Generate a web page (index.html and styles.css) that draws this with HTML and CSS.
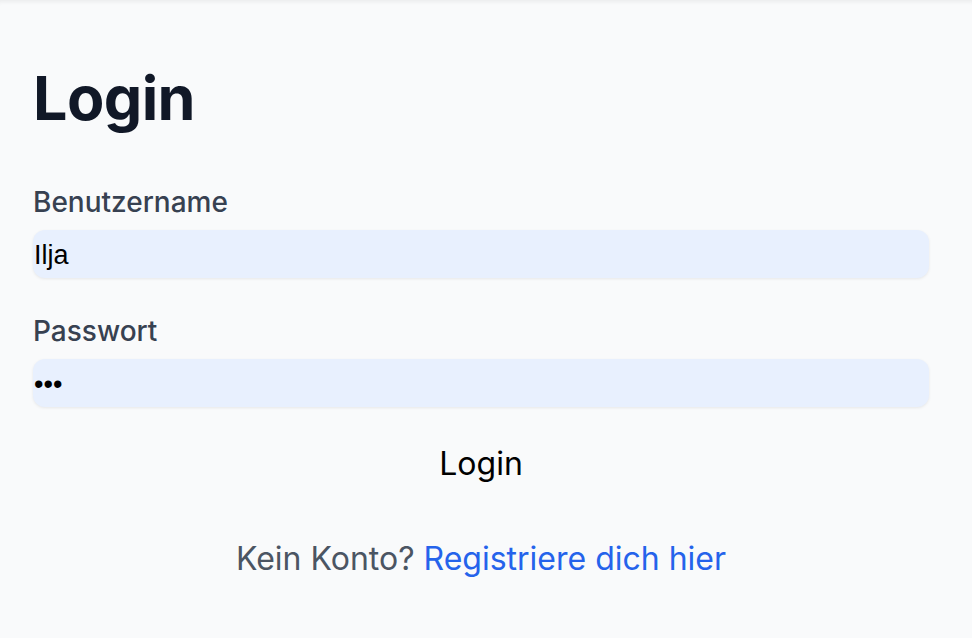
FILE: index.html
```html
<!DOCTYPE html>
<html lang="de">
<head>
<meta charset="utf-8">
<title>Login</title>
<link rel="stylesheet" href="styles.css">
</head>
<body>
<main class="page">
  <h1 class="title">Login</h1>
  <form class="form">
    <div class="field">
      <label class="label" for="user">Benutzername</label>
      <input class="input" id="user" type="text" value="Ilja">
    </div>
    <div class="field">
      <label class="label" for="pw">Passwort</label>
      <input class="input input-pw" id="pw" type="password" value="abc">
    </div>
    <button class="button" type="button">Login</button>
  </form>
  <p class="footer">Kein Konto? <a class="link" href="#">Registriere dich hier</a></p>
</main>
</body>
</html>
```

FILE: styles.css
```css
* { box-sizing: border-box; }
html, body { margin: 0; padding: 0; }
body {
  background: #f9fafb;
  font-family: Inter, "Noto Sans", sans-serif;
  height: 638px;
  overflow: hidden;
}
.page {
  height: 100%;
  padding: 63px 43px 0 33px;
  box-shadow: inset 0 5px 4px -3px rgba(0,0,0,0.06);
}
.title {
  margin: 0;
  font-size: 61px;
  font-weight: 700;
  line-height: 70px;
  color: #111827;
  letter-spacing: -0.6px;
}
.form {
  margin-top: 50px;
  display: flex;
  flex-direction: column;
}
.field {
  display: flex;
  flex-direction: column;
  margin-bottom: 34px;
}
.field + .field { margin-bottom: 37px; }
.label {
  font-size: 28px;
  line-height: 38px;
  font-weight: 500;
  color: #374151;
  margin-bottom: 9px;
}
.input {
  height: 48px;
  border: none;
  border-radius: 12px;
  background: #e8f0fe;
  box-shadow: 0 1px 3px rgba(0,0,0,0.08);
  padding: 3px 1px 0;
  font-family: "Liberation Sans", Arial, sans-serif;
  font-size: 27px;
  color: #000;
  outline: none;
}
.input-pw { font-size: 27px; padding-top: 2px; }
.button {
  align-self: center;
  background: none;
  border: none;
  font-family: Inter, sans-serif;
  font-size: 32px;
  color: #000;
  padding: 0;
  line-height: 40px;
  cursor: pointer;
}
.footer {
  margin: 55px 0 0;
  text-align: center;
  font-size: 32px;
  line-height: 40px;
  color: #4b5563;
}
.link {
  color: #2563eb;
  text-decoration: none;
}
```
